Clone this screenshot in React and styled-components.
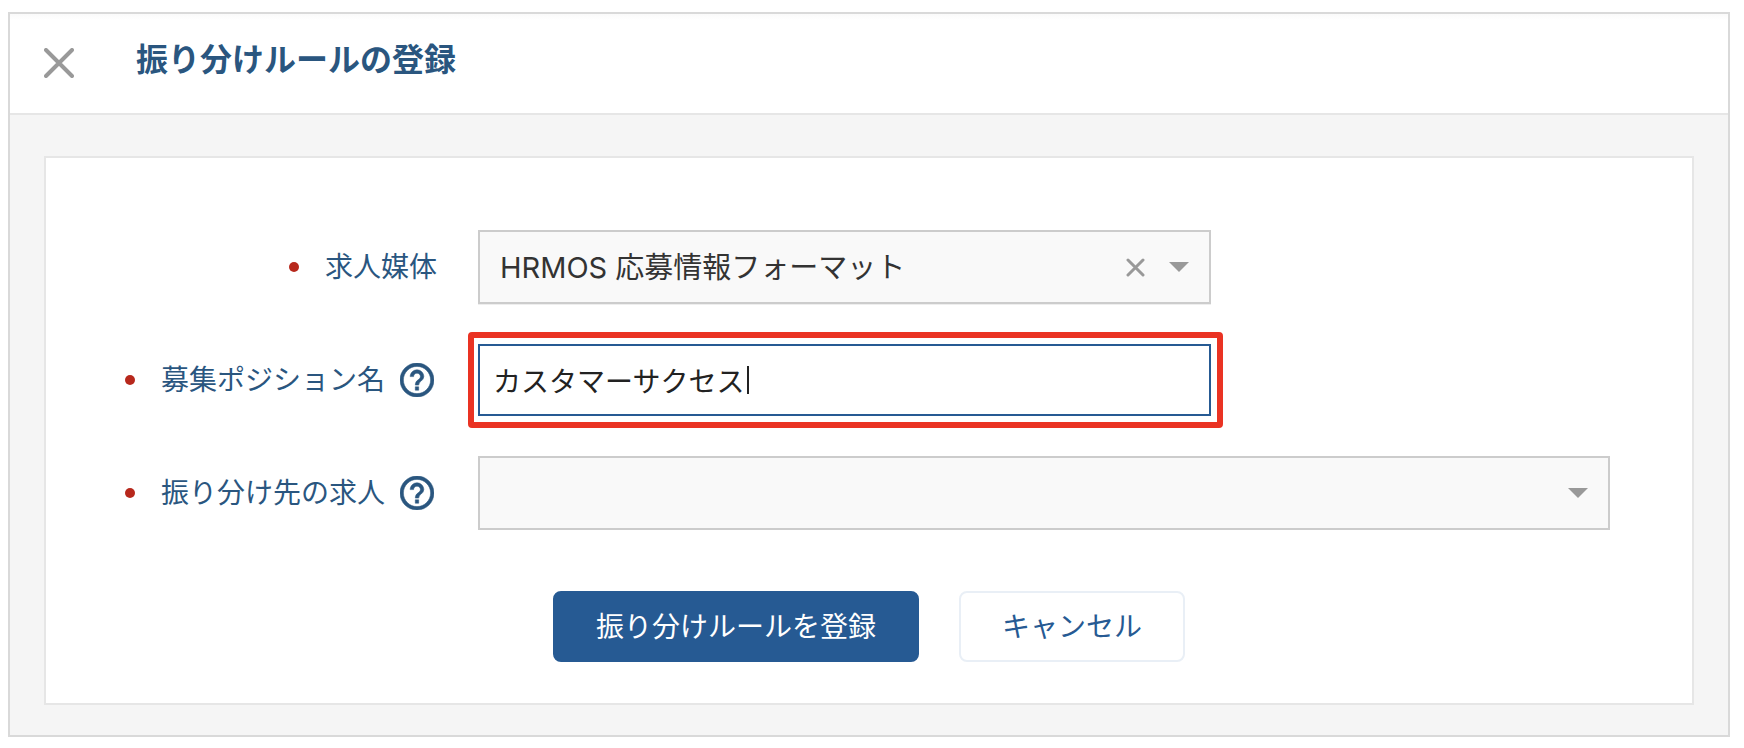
import React, { useState } from "react";
import styled, { createGlobalStyle } from "styled-components";

const GlobalStyle = createGlobalStyle`
  *, *::before, *::after { box-sizing: border-box; }
  body {
    margin: 0;
    background: #fff;
    font-family: Inter, "Noto Sans CJK JP", sans-serif;
    font-size: 28px;
    color: #333;
  }
  button, input, select { font: inherit; }
`;

const Dialog = styled.section`
  margin: 12px 14px 12px 8px;
  border: 2px solid #d9d9d9;
  background: #f5f5f5;
`;

const Header = styled.header`
  display: flex;
  align-items: center;
  gap: 62px;
  min-height: 101px;
  padding: 0 34px 2px;
  border-bottom: 2px solid #e6e6e6;
  background: linear-gradient(#fafafa, #fff 6px);
`;

const IconButton = styled.button`
  display: flex;
  padding: 0;
  border: 0;
  background: none;
  color: #999;
  cursor: pointer;
`;

const Title = styled.h1`
  margin: 0;
  padding-bottom: 6px;
  font-size: 32px;
  line-height: 48px;
  font-weight: 700;
  color: #2a567f;
`;

const Card = styled.form`
  display: flex;
  flex-direction: column;
  gap: 40px;
  margin: 41px 34px 30px;
  padding: 72px 82px 41px 26px;
  border: 2px solid #e6e6e6;
  background: #fff;
`;

const Row = styled.div`
  display: grid;
  grid-template-columns: 366px minmax(0, 1fr);
  column-gap: 40px;
  align-items: center;
`;

const LabelCell = styled.div`
  display: flex;
  align-items: center;
  justify-content: flex-end;
  color: #2a567f;
`;

const Label = styled.label`
  display: flex;
  align-items: center;
  gap: 26px;
  padding-right: 1px;
  line-height: 40px;
  white-space: nowrap;

  &::before {
    content: "";
    width: 10px;
    height: 10px;
    border-radius: 50%;
    background: #b7281c;
  }
`;

const HelpButton = styled(IconButton)`
  margin: 0 4px 0 14px;
  color: #2a567f;
`;

const Field = styled.div`
  position: relative;
  width: 100%;
  max-width: ${(p) => (p.$wide ? "none" : "733px")};
`;

const Select = styled.select`
  display: block;
  width: 100%;
  height: 74px;
  padding: 0 100px 0 20px;
  border: 2px solid #ccc;
  border-radius: 0;
  background: #f9f9f9;
  color: #333;
  font-size: 29px;
  appearance: none;
  box-shadow: ${(p) => (p.$raised ? "0 1px 0 #eee" : "none")};
`;

const SelectIcons = styled.div`
  position: absolute;
  top: 0;
  right: 22px;
  bottom: 0;
  display: flex;
  align-items: center;
  gap: 24px;
  color: #999;
  pointer-events: none;

  button { pointer-events: auto; }
`;

const TextInput = styled.input`
  display: block;
  width: 100%;
  height: 72px;
  padding: 0 13px;
  border: 2px solid #265a93;
  border-radius: 0;
  outline: 0;
  background: #fff;
  color: #222;
  caret-color: transparent;
`;

const Caret = styled.span`
  position: absolute;
  top: 22px;
  left: calc(17px + ${(p) => p.$chars}em);
  width: 2px;
  height: 28px;
  background: #222;
  pointer-events: none;
`;

const Highlight = styled.span`
  position: absolute;
  inset: -12px -12px -12px -10px;
  border: 6px solid #ea3323;
  border-radius: 4px;
  pointer-events: none;
`;

const Actions = styled.div`
  display: flex;
  flex-wrap: wrap;
  justify-content: center;
  gap: 40px;
  margin: 21px -56px 0 0;
`;

const Button = styled.button`
  height: 71px;
  padding: 0 41px;
  border: 2px solid ${(p) => (p.$primary ? "#265a93" : "#e9eff6")};
  border-radius: 8px;
  background: ${(p) => (p.$primary ? "#265a93" : "#fff")};
  color: ${(p) => (p.$primary ? "#fff" : "#265a93")};
  line-height: 40px;
  cursor: pointer;
`;

const Cross = ({ size, stroke }) => (
  <svg width={size} height={size} viewBox={`0 0 ${size} ${size}`} aria-hidden="true">
    <path
      d={`M2 2L${size - 2} ${size - 2}M${size - 2} 2L2 ${size - 2}`}
      stroke="currentColor"
      strokeWidth={stroke}
      strokeLinecap="round"
    />
  </svg>
);

const Arrow = () => (
  <svg width="20" height="10" viewBox="0 0 20 10" aria-hidden="true">
    <path d="M0 0H20L10 10Z" fill="currentColor" />
  </svg>
);

const Help = () => (
  <HelpButton type="button" aria-label="ヘルプ">
    <svg width="34" height="34" viewBox="2 2 20 20" fill="currentColor" aria-hidden="true">
      <path
        d="M11 18h2v-2h-2v2zm1-16C6.48 2 2 6.48 2 12s4.48 10 10 10 10-4.48 10-10S17.52 2 12 2zm0 18c-4.41 0-8-3.59-8-8s3.59-8 8-8 8 3.59 8 8-3.59 8-8 8zm0-14c-2.21 0-4 1.79-4 4h2c0-1.1.9-2 2-2s2 .9 2 2c0 2-3 1.75-3 5h2c0-2.25 3-2.5 3-5 0-2.21-1.79-4-4-4z"
        stroke="currentColor"
        strokeWidth="0.3"
      />
    </svg>
  </HelpButton>
);

const MEDIA = "HRMOS 応募情報フォーマット";

export default function App() {
  const [media, setMedia] = useState(MEDIA);
  const [position, setPosition] = useState("カスタマーサクセス");

  return (
    <>
      <GlobalStyle />
      <Dialog role="dialog" aria-labelledby="dialog-title">
        <Header>
          <IconButton type="button" aria-label="閉じる">
            <Cross size={30} stroke={4} />
          </IconButton>
          <Title id="dialog-title">振り分けルールの登録</Title>
        </Header>
        <Card onSubmit={(e) => e.preventDefault()}>
          <Row>
            <LabelCell>
              <Label htmlFor="media">求人媒体</Label>
            </LabelCell>
            <Field>
              <Select id="media" $raised value={media} onChange={(e) => setMedia(e.target.value)}>
                <option value="" />
                <option value={MEDIA}>{MEDIA}</option>
              </Select>
              <SelectIcons>
                <IconButton type="button" aria-label="クリア" onClick={() => setMedia("")}>
                  <Cross size={19} stroke={3} />
                </IconButton>
                <Arrow />
              </SelectIcons>
            </Field>
          </Row>
          <Row>
            <LabelCell>
              <Label htmlFor="position">募集ポジション名</Label>
              <Help />
            </LabelCell>
            <Field>
              <TextInput
                id="position"
                type="text"
                value={position}
                onChange={(e) => setPosition(e.target.value)}
              />
              <Caret $chars={position.length} />
              <Highlight />
            </Field>
          </Row>
          <Row>
            <LabelCell>
              <Label htmlFor="job">振り分け先の求人</Label>
              <Help />
            </LabelCell>
            <Field $wide>
              <Select id="job" defaultValue="">
                <option value="" />
              </Select>
              <SelectIcons>
                <Arrow />
              </SelectIcons>
            </Field>
          </Row>
          <Actions>
            <Button type="submit" $primary>振り分けルールを登録</Button>
            <Button type="button">キャンセル</Button>
          </Actions>
        </Card>
      </Dialog>
    </>
  );
}
